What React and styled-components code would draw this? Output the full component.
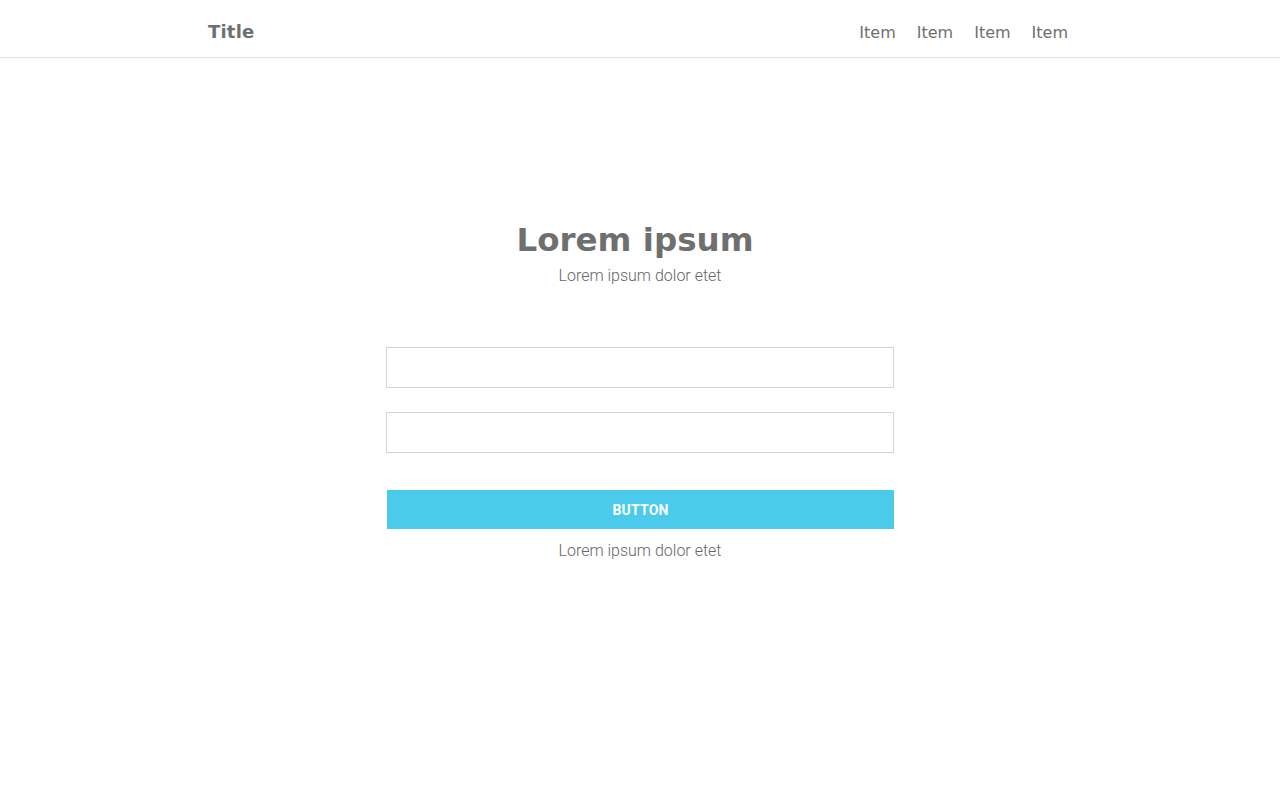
import React from "react";
import styled, { createGlobalStyle } from "styled-components";

const GlobalStyle = createGlobalStyle`
  body {
    margin: 0;
    background: #ffffff;
    font-family: Roboto, "Liberation Sans", sans-serif;
    color: #6f6f6f;
  }
  * { box-sizing: border-box; }
`;

const Header = styled.header`
  height: 58px;
  border-bottom: 1px solid #e2e2e2;
`;

const HeaderInner = styled.div`
  width: 864px;
  height: 100%;
  margin: 0 auto;
  padding: 6px 4px 0 0;
  display: flex;
  align-items: center;
  justify-content: space-between;
`;

const Brand = styled.div`
  font-family: "DejaVu Sans", sans-serif;
  font-weight: bold;
  font-size: 18px;
  color: #6f6f6f;
  letter-spacing: 0.2px;
`;

const Nav = styled.ul`
  list-style: none;
  margin: 0;
  padding: 0;
  display: flex;
  gap: 21px;
`;

const NavItem = styled.li`
  font-family: "DejaVu Sans", sans-serif;
  font-size: 16px;
  color: #6f6f6f;
  padding-top: 2px;
`;

const Main = styled.main`
  display: flex;
  flex-direction: column;
  align-items: center;
  padding-top: 158px;
`;

const Heading = styled.h1`
  margin: 0 10px 0 0;
  font-family: "DejaVu Sans", sans-serif;
  font-weight: bold;
  font-size: 32.5px;
  line-height: 48px;
  color: #6f6f6f;
`;

const Lead = styled.p`
  margin: ${(p) => p.$top || 0}px 0 0;
  font-weight: 300;
  font-size: 16px;
  line-height: 20px;
  color: #666666;
`;

const Form = styled.form`
  width: 508px;
  margin-top: 61px;
  display: flex;
  flex-direction: column;
  align-items: center;
`;

const Field = styled.input`
  width: 100%;
  height: 41px;
  border: 1px solid #d6d6d6;
  outline: none;
  margin-bottom: 24px;
  font-family: Roboto, sans-serif;
  font-size: 15px;
  padding: 0 12px;
`;

const Button = styled.button`
  width: 507px;
  margin: 13px 0 0 1px;
  height: 39px;
  border: none;
  background: #4acbeb;
  color: #ffffff;
  font-family: Roboto, sans-serif;
  font-weight: bold;
  font-size: 14px;
  letter-spacing: 0.2px;
`;

export default function App() {
  return (
    <>
      <GlobalStyle />
      <Header>
        <HeaderInner>
          <Brand>Title</Brand>
          <Nav>
            <NavItem>Item</NavItem>
            <NavItem>Item</NavItem>
            <NavItem>Item</NavItem>
            <NavItem>Item</NavItem>
          </Nav>
        </HeaderInner>
      </Header>
      <Main>
        <Heading>Lorem ipsum</Heading>
        <Lead $top={2}>Lorem ipsum dolor etet</Lead>
        <Form onSubmit={(e) => e.preventDefault()}>
          <Field type="text" />
          <Field type="password" />
          <Button type="submit">BUTTON</Button>
          <Lead $top={12}>Lorem ipsum dolor etet</Lead>
        </Form>
      </Main>
    </>
  );
}
